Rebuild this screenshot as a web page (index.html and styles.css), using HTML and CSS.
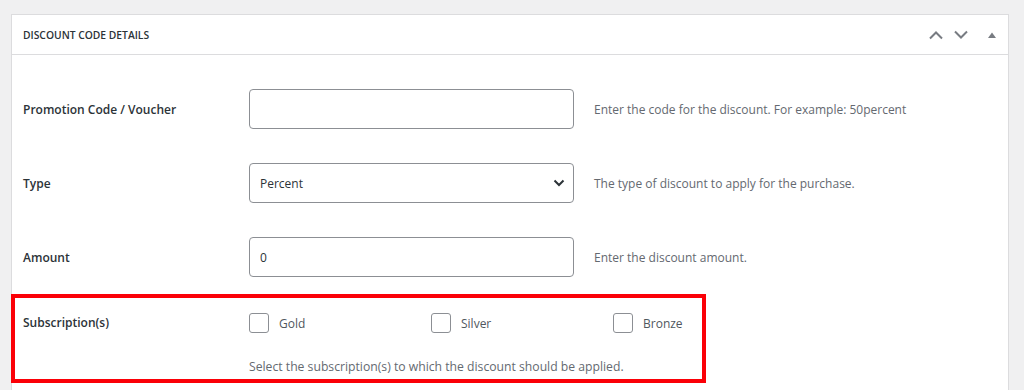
FILE: index.html
```html
<!DOCTYPE html>
<html>
<head>
    <meta charset="utf-8">
    <link rel="stylesheet" href="styles.css">
</head>
<body>
    <div class="postbox">
        <div class="postbox-header">
            <h2>Discount Code Details</h2>
            <div class="handle-actions">
                <svg class="handle-icon" width="16" height="10" viewBox="0 0 16 10"><path d="M2 8.5 L8 2.5 L14 8.5" fill="none" stroke="#787c82" stroke-width="2"/></svg>
                <svg class="handle-icon" width="16" height="10" viewBox="0 0 16 10"><path d="M2 1.5 L8 7.5 L14 1.5" fill="none" stroke="#787c82" stroke-width="2"/></svg>
                <svg class="toggle-icon" width="10" height="8" viewBox="0 0 10 8"><path d="M1 7 L5 1.5 L9 7 Z" fill="#787c82"/></svg>
            </div>
        </div>

        <div class="inside">
            <div class="form-row">
                <div class="form-label">Promotion Code / Voucher</div>
                <div class="form-field"><input type="text" class="text-input" value=""></div>
                <div class="form-help">Enter the code for the discount. For example: 50percent</div>
            </div>

            <div class="form-row">
                <div class="form-label">Type</div>
                <div class="form-field">
                    <div class="select-box">
                        <span>Percent</span>
                        <svg width="12" height="8" viewBox="0 0 12 8"><path d="M1.5 1.5 L6 6 L10.5 1.5" fill="none" stroke="#2c3338" stroke-width="2"/></svg>
                    </div>
                </div>
                <div class="form-help">The type of discount to apply for the purchase.</div>
            </div>

            <div class="form-row">
                <div class="form-label">Amount</div>
                <div class="form-field"><input type="text" class="text-input" value="0"></div>
                <div class="form-help">Enter the discount amount.</div>
            </div>

            <div class="form-row subscriptions highlighted">
                <div class="form-label">Subscription(s)</div>
                <div class="sub-field">
                    <div class="checkbox-list">
                        <label class="check-option"><span class="checkbox"></span>Gold</label>
                        <label class="check-option"><span class="checkbox"></span>Silver</label>
                        <label class="check-option"><span class="checkbox"></span>Bronze</label>
                    </div>
                    <div class="sub-help">Select the subscription(s) to which the discount should be applied.</div>
                </div>
            </div>
        </div>
    </div>
</body>
</html>
```

FILE: styles.css
```css
body {
    margin: 0;
    background: #f0f0f1;
    font-family: "Open Sans", "Noto Sans", sans-serif;
    color: #1d2327;
    font-size: 12px;
}

.postbox {
    margin: 14px 0 0 11px;
    width: 998px;
    height: 376px;
    background: #fff;
    border: 1px solid #dcdcde;
    border-bottom: none;
    box-sizing: border-box;
}

.postbox-header {
    display: flex;
    align-items: center;
    justify-content: space-between;
    height: 39px;
    border-bottom: 1px solid #dcdcde;
    padding: 0 11px;
}

.postbox-header h2 {
    margin: 0;
    font-size: 10.3px;
    font-weight: 600;
    text-transform: uppercase;
    color: #2c3338;
}

.handle-actions {
    display: flex;
    align-items: center;
    gap: 9px;
}

.toggle-icon {
    margin-left: 9px;
}

.inside {
    padding: 17px 0 0 11px;
}

.form-row {
    display: flex;
    align-items: center;
    height: 74px;
}

.form-label {
    flex: none;
    width: 226px;
    font-weight: 600;
    color: #2c3338;
    font-size: 12px;
}

.form-field {
    flex: none;
    width: 325px;
}

.text-input,
.select-box {
    box-sizing: border-box;
    width: 325px;
    height: 40px;
    border: 1px solid #8c8f94;
    border-radius: 4px;
    padding: 0 10px;
    font-family: inherit;
    font-size: 12px;
    color: #2c3338;
    background: #fff;
    outline: none;
}

.select-box {
    display: flex;
    align-items: center;
    justify-content: space-between;
    padding-right: 8px;
}

.form-help {
    margin-left: 20px;
    color: #646970;
    font-size: 12px;
}

.subscriptions {
    align-items: flex-start;
}

.highlighted {
    box-sizing: border-box;
    width: 695px;
    height: 89px;
    margin-left: -12px;
    border: 4px solid #fb0007;
    padding: 0 0 0 8px;
}

.subscriptions .form-label {
    padding-top: 16px;
}

.sub-field {
    padding-top: 15px;
}

.checkbox-list {
    display: flex;
}

.check-option {
    display: flex;
    align-items: center;
    width: 182px;
    color: #50575e;
    font-size: 12px;
}

.checkbox {
    box-sizing: border-box;
    width: 20px;
    height: 20px;
    border: 1px solid #8c8f94;
    border-radius: 3px;
    margin-right: 10px;
}

.sub-help {
    margin-top: 25px;
    color: #646970;
    font-size: 12.2px;
}
```
